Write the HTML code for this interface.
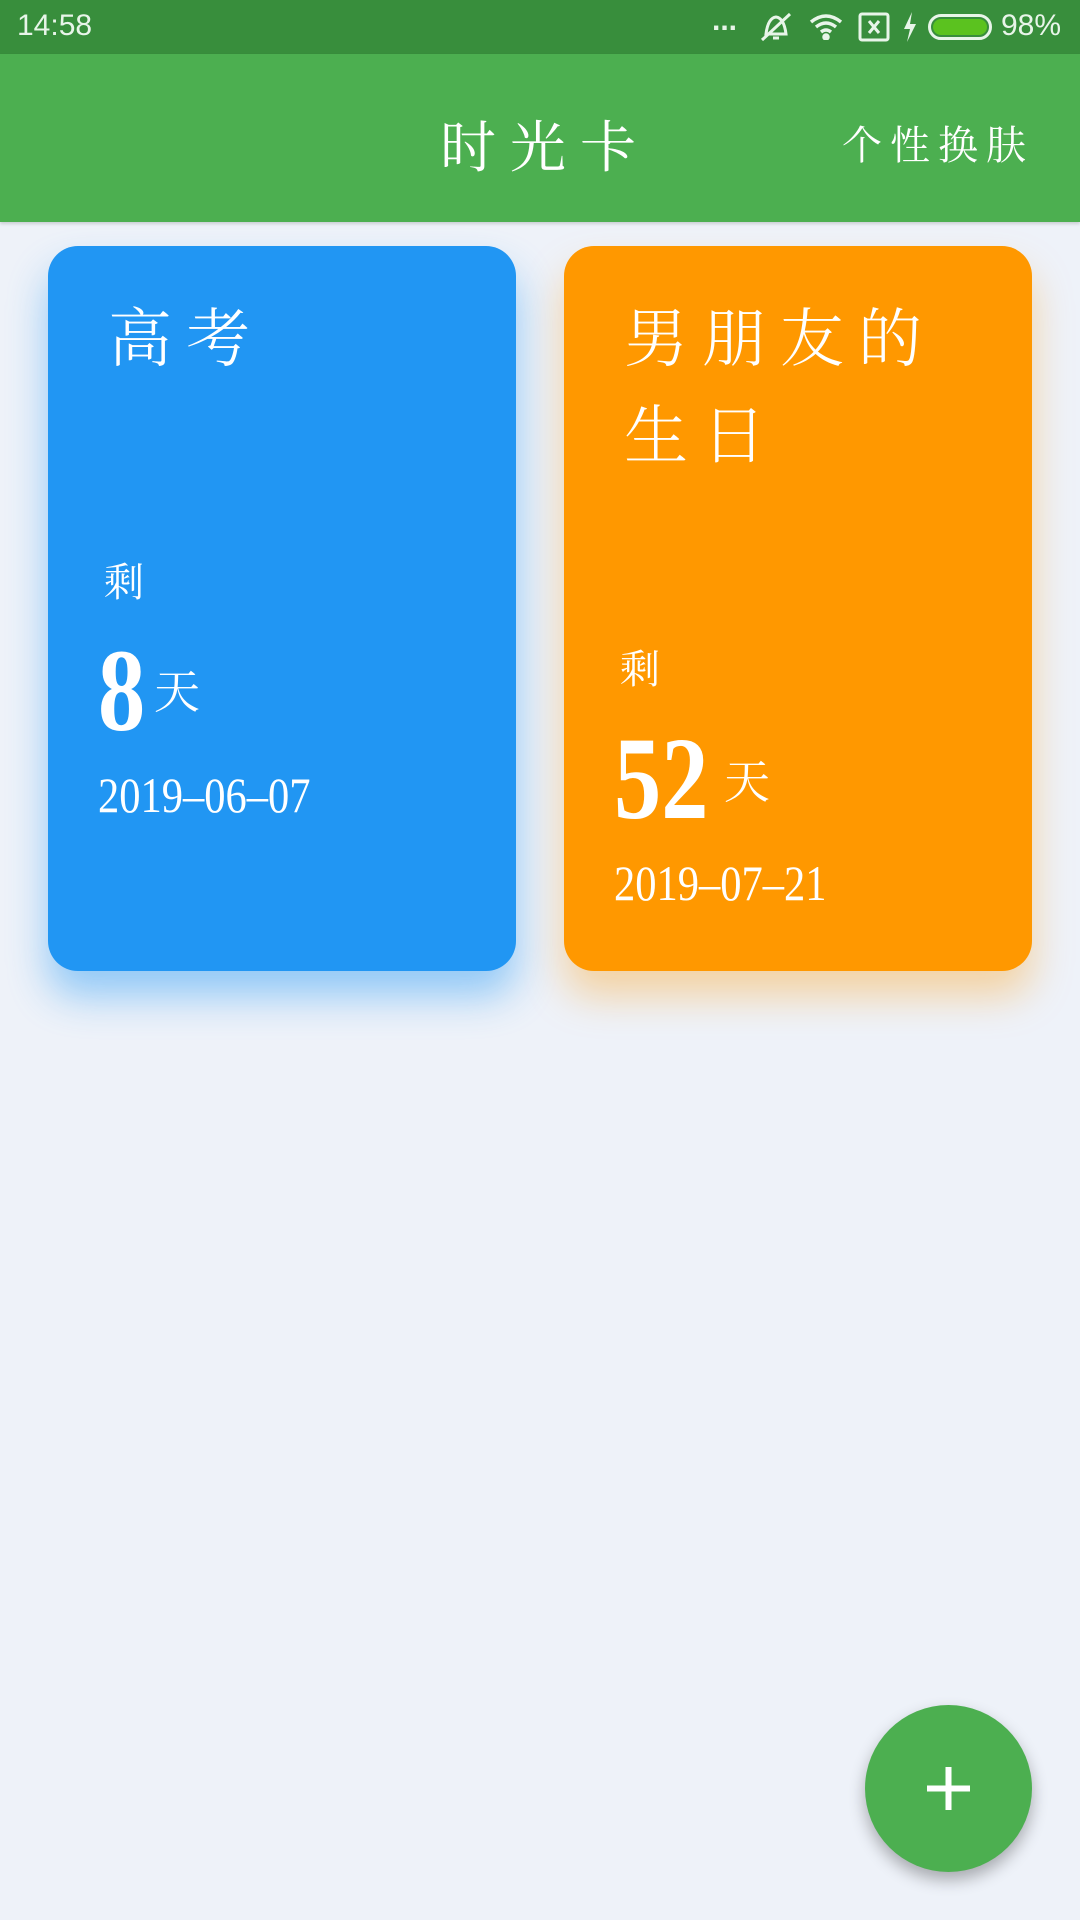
<!DOCTYPE html>
<html><head><meta charset="utf-8"><style>
*{margin:0;padding:0;box-sizing:border-box}
body{width:1080px;height:1920px;background:#eef2f9;position:relative;overflow:hidden;font-family:"Liberation Serif","Noto Serif CJK SC",serif;color:#fff}
.sb{position:absolute;left:0;top:0;width:1080px;height:54px;background:#388e3c;font-family:"Liberation Sans",sans-serif;font-size:30px;color:#e8f5e9}
.tb{position:absolute;left:0;top:54px;width:1080px;height:168px;background:#4caf50;box-shadow:0 2px 3px rgba(0,0,0,.15)}
.card{position:absolute;top:246px;width:468px;height:725px;border-radius:30px}
.blue{left:48px;background:#2196f3;box-shadow:0 25px 40px rgba(33,150,243,.45)}
.or{left:564px;background:#ff9800;box-shadow:0 25px 40px rgba(255,152,0,.35)}
.t{position:absolute;font-size:64px;letter-spacing:14px;line-height:97px;font-weight:300}
.s{position:absolute;font-size:40px}
.n{position:absolute;font-weight:bold;font-size:118px;transform:scaleX(.8);transform-origin:left bottom;line-height:1}
.d{position:absolute;font-size:50px;transform:scaleX(.85);transform-origin:left;white-space:nowrap}
.fab{position:absolute;left:865px;top:1705px;width:167px;height:167px;border-radius:50%;background:#4caf50;box-shadow:0 8px 16px rgba(0,0,0,.3)}
</style></head><body>
<div class="sb"><span style="position:absolute;left:17px;top:9px">14:58</span>
<span style="position:absolute;left:712px;top:4px;font-size:30px;font-weight:bold">...</span>
<svg style="position:absolute;left:758px;top:10px" width="36" height="34" viewBox="0 0 36 34" fill="none" stroke="#e8f5e9" stroke-width="3"><path d="M8 24 Q10 8 18 7 Q26 8 28 24Z M15 28h6 M4 30 L32 4"/></svg>
<svg style="position:absolute;left:808px;top:12px" width="36" height="28" viewBox="0 0 36 28" fill="none" stroke="#e8f5e9" stroke-width="3.5"><path d="M3 10Q18-2 33 10M8 15Q18 7 28 15M13 20Q18 16 23 20"/><circle cx="18" cy="25" r="2" fill="#e8f5e9"/></svg>
<svg style="position:absolute;left:858px;top:12px" width="32" height="30" viewBox="0 0 32 30" fill="none" stroke="#e8f5e9" stroke-width="3"><rect x="2" y="2" width="28" height="26" rx="2"/><path d="M11 9l10 12M21 9L11 21"/></svg>
<svg style="position:absolute;left:902px;top:12px" width="16" height="30" viewBox="0 0 16 30" fill="#e8f5e9"><path d="M10 0L2 17h6L5 30 14 12H8z"/></svg>
<div style="position:absolute;left:928px;top:14px;width:64px;height:26px;border:3px solid #e8f5e9;border-radius:13px;padding:2px"><div style="width:100%;height:100%;background:#5bc21f;border-radius:9px"></div></div>
<span style="position:absolute;left:1001px;top:9px">98%</span></div>
<div class="tb">
<div style="position:absolute;left:440px;top:50px;font-size:56px;letter-spacing:14px">时光卡</div>
<div style="position:absolute;left:842px;top:60px;font-size:40px;letter-spacing:8px">个性换肤</div></div>
<div class="card blue">
<div class="t" style="left:60px;top:45px">高考</div>
<div class="s" style="left:56px;top:305px">剩</div>
<div class="n" style="left:50px;top:386px">8</div>
<div class="s" style="left:106px;top:410px;font-size:46px">天</div>
<div class="d" style="left:50px;top:520px">2019–06–07</div>
</div>
<div class="card or">
<div class="t" style="left:60px;top:45px">男朋友的<br>生日</div>
<div class="s" style="left:56px;top:392px">剩</div>
<div class="n" style="left:50px;top:474px">52</div>
<div class="s" style="left:160px;top:500px;font-size:46px">天</div>
<div class="d" style="left:50px;top:608px">2019–07–21</div>
</div>
<div class="fab"><svg width="167" height="167" viewBox="0 0 167 167"><path d="M83.5 62v43M62 83.5h43" stroke="#fff" stroke-width="6"/></svg></div>
</body></html>
